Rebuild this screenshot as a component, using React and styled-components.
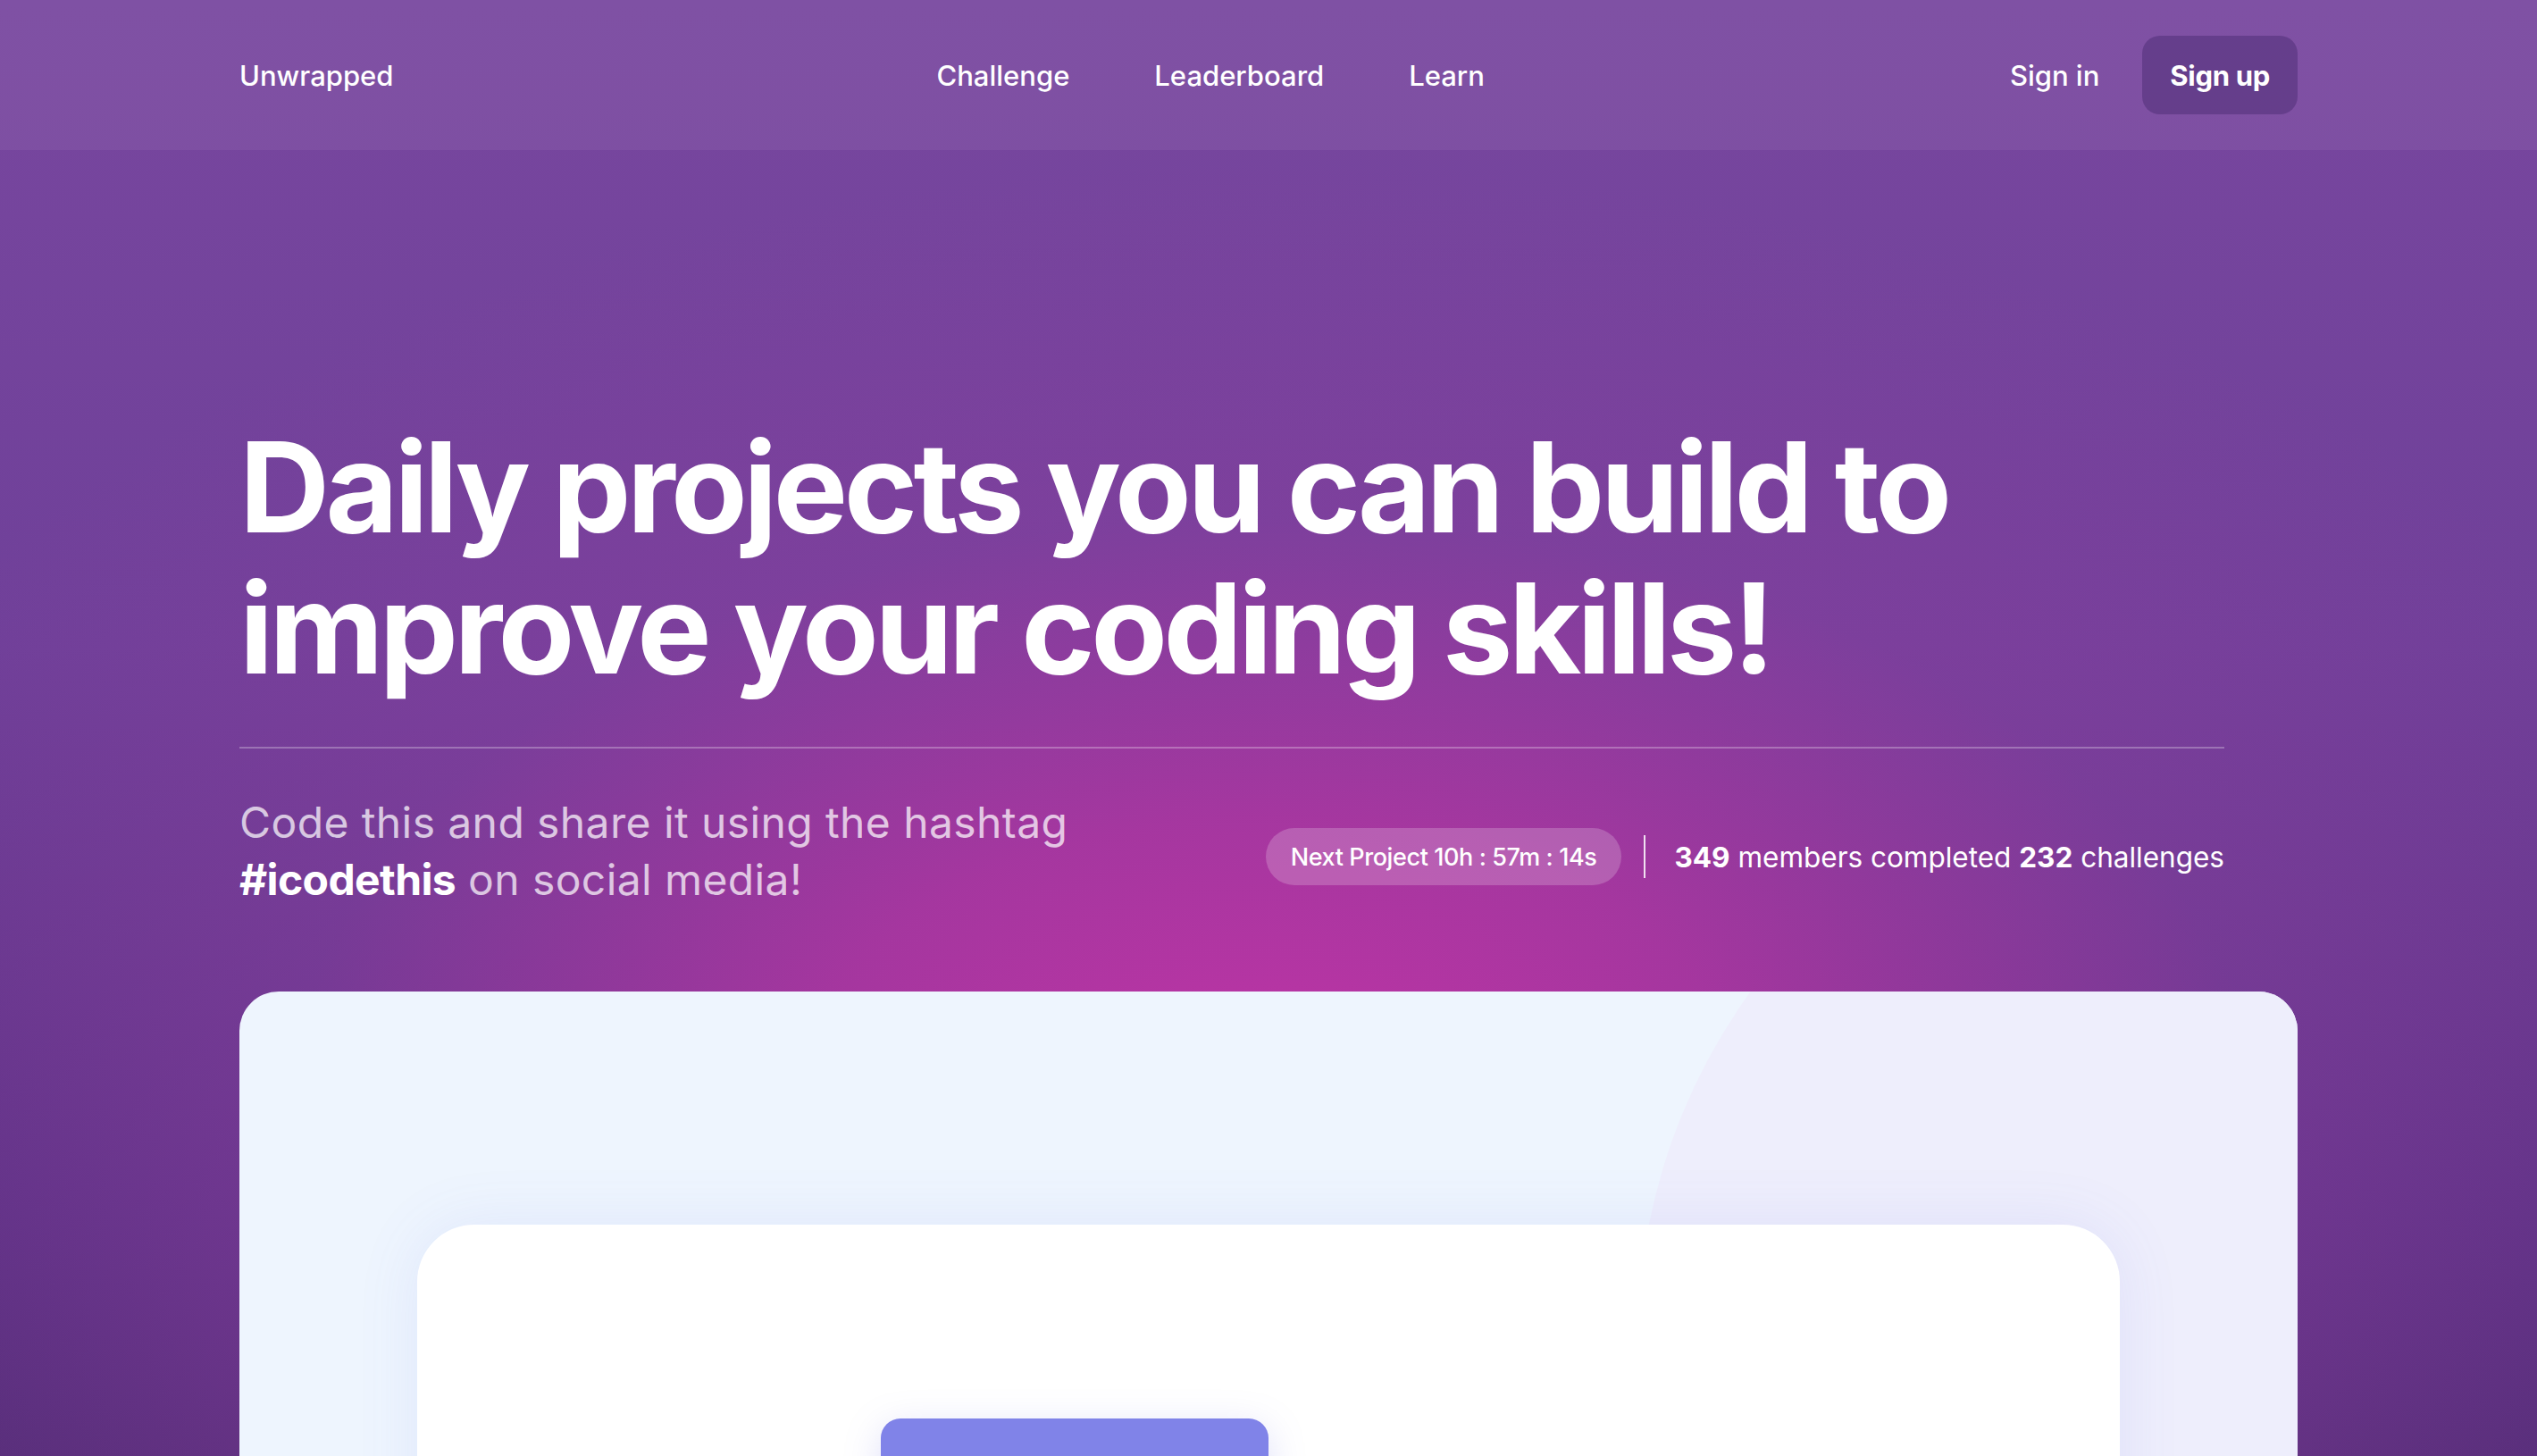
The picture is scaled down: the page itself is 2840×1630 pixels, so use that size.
import React from "react";
import styled, { createGlobalStyle } from "styled-components";

const GlobalStyle = createGlobalStyle`
  * {
    box-sizing: border-box;
  }
  body {
    margin: 0;
    font-family: Inter, "Noto Sans", sans-serif;
    color: #fff;
  }
`;

const App = () => {
  return (
    <>
      <GlobalStyle />
      <Page>
        <Header>
          <NavInner>
            <Brand href="#">Unwrapped</Brand>
            <NavLinks>
              <NavLink href="#">Challenge</NavLink>
              <NavLink href="#">Leaderboard</NavLink>
              <NavLink href="#">Learn</NavLink>
            </NavLinks>
            <Auth>
              <NavLink href="#">Sign in</NavLink>
              <SignUp>Sign up</SignUp>
            </Auth>
          </NavInner>
        </Header>

        <Main>
          <Hero>
            <Title>
              Daily projects you can build to
              <br />
              improve your coding skills!
            </Title>
            <Divider />
            <InfoRow>
              <Tagline>
                Code this and share it using the hashtag
                <br />
                <strong>#icodethis</strong> on social media!
              </Tagline>
              <Stats>
                <Countdown>Next Project 10h : 57m : 14s</Countdown>
                <Separator />
                <Members>
                  <strong>349</strong> members completed <strong>232</strong>{" "}
                  challenges
                </Members>
              </Stats>
            </InfoRow>
          </Hero>

          <Showcase>
            <Preview>
              <PreviewButton />
            </Preview>
          </Showcase>
        </Main>
      </Page>
    </>
  );
};

const Page = styled.div`
  min-height: 100vh;
  overflow: hidden;
  background:
    radial-gradient(
      ellipse 62% 58% at 50% 68%,
      rgba(192, 52, 166, 1) 0%,
      rgba(176, 54, 162, 0.85) 30%,
      rgba(140, 62, 160, 0.45) 62%,
      rgba(120, 66, 160, 0) 100%
    ),
    linear-gradient(180deg, #78479f 0%, #6f4099 40%, #5a3183 75%, #4d2a6e 100%);
`;

const Header = styled.header`
  height: 168px;
  background: rgba(255, 255, 255, 0.06);
`;

const NavInner = styled.nav`
  max-width: 2304px;
  height: 100%;
  margin: 0 auto;
  display: flex;
  align-items: center;
  justify-content: space-between;
`;

const Brand = styled.a`
  color: #fff;
  text-decoration: none;
  font-size: 31px;
  font-weight: 500;
`;

const NavLinks = styled.div`
  display: flex;
  gap: 95px;
  margin-left: 20px;
`;

const NavLink = styled.a`
  color: #fff;
  text-decoration: none;
  font-size: 31px;
  font-weight: 500;
`;

const Auth = styled.div`
  display: flex;
  align-items: center;
  gap: 48px;
`;

const SignUp = styled.button`
  height: 88px;
  padding: 0 31px;
  border: none;
  border-radius: 20px;
  background: rgba(70, 40, 110, 0.45);
  color: #fff;
  font-family: Inter, "Noto Sans", sans-serif;
  font-size: 31px;
  font-weight: 700;
  letter-spacing: -0.3px;
`;

const Main = styled.main`
  max-width: 2304px;
  margin: 0 auto;
`;

const Hero = styled.section`
  max-width: 2222px;
  padding-top: 298px;
`;

const Title = styled.h1`
  margin: 0;
  font-size: 140px;
  line-height: 158px;
  font-weight: 700;
  letter-spacing: -4.5px;
`;

const Divider = styled.hr`
  margin: 54px 0 0;
  border: none;
  height: 2px;
  background: rgba(255, 255, 255, 0.28);
`;

const InfoRow = styled.div`
  display: flex;
  align-items: center;
  justify-content: space-between;
  padding-top: 51px;
`;

const Tagline = styled.p`
  margin: 0;
  font-size: 48px;
  line-height: 64px;
  font-weight: 400;
  color: rgba(255, 255, 255, 0.72);
  letter-spacing: 0.4px;

  strong {
    color: #fff;
    font-weight: 700;
    letter-spacing: -0.6px;
  }
`;

const Stats = styled.div`
  display: flex;
  align-items: center;
  margin-top: 12px;
`;

const Countdown = styled.span`
  display: inline-flex;
  align-items: center;
  height: 64px;
  padding: 0 28px;
  border-radius: 32px;
  background: rgba(255, 255, 255, 0.2);
  font-size: 27px;
  font-weight: 500;
  letter-spacing: -0.4px;
`;

const Separator = styled.span`
  width: 2px;
  height: 48px;
  margin: 0 32px 0 25px;
  background: rgba(255, 255, 255, 0.85);
`;

const Members = styled.span`
  font-size: 31.5px;
  font-weight: 400;
  letter-spacing: 0;

  strong {
    font-weight: 700;
  }
`;

const Showcase = styled.div`
  position: relative;
  overflow: hidden;
  margin-top: 93px;
  padding: 261px 199px 0;
  height: 700px;
  border-radius: 44px 44px 0 0;
  background: #eef5fe;

  &::before {
    content: "";
    position: absolute;
    left: 1565px;
    top: -276px;
    width: 1334px;
    height: 1334px;
    border-radius: 50%;
    background: #eeeefc;
  }
`;

const Preview = styled.div`
  position: relative;
  height: 100%;
  padding: 217px 0 0 519px;
  border-radius: 64px 64px 0 0;
  background: #fff;
  box-shadow: 0 0 70px rgba(96, 110, 230, 0.1);
`;

const PreviewButton = styled.div`
  width: 434px;
  height: 120px;
  border-radius: 22px;
  background: #8083e8;
  box-shadow: 0 10px 40px rgba(128, 131, 232, 0.25);
`;

export default App;
